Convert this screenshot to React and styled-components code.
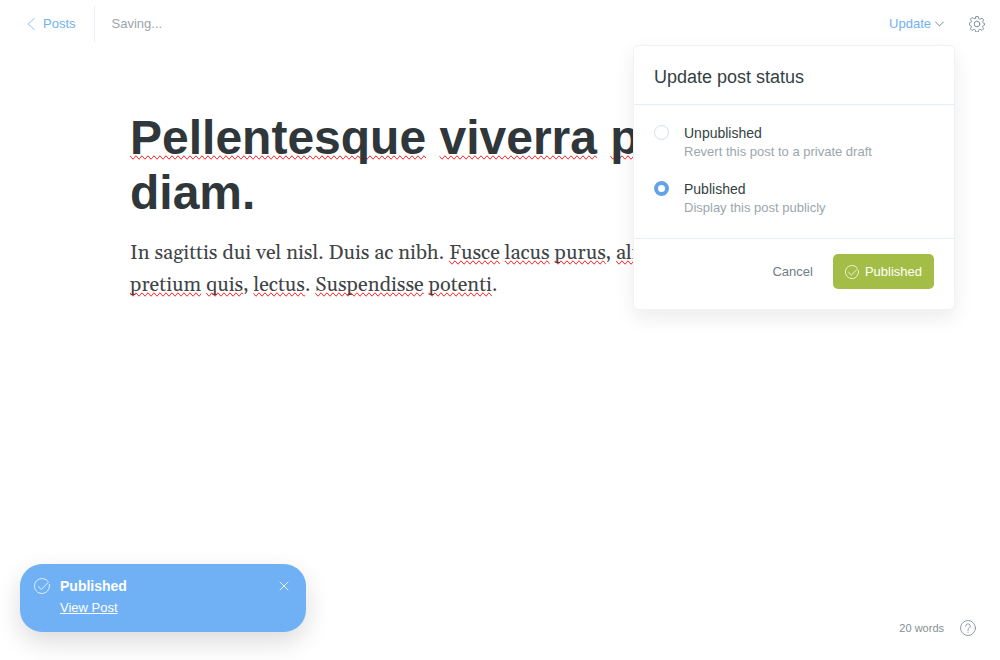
import React, { useState } from "react";
import styled, { createGlobalStyle, ThemeProvider } from "styled-components";

const theme = {
  blue: "#70b1f6",
  blueDeep: "#64a3e6",
  green: "#a4bd46",
  dark: "#2f373b",
  text: "#343f44",
  mid: "#738a94",
  muted: "#6f7d86",
  light: "#9ba6ad",
  line: "#e5eff5",
};

const GlobalStyle = createGlobalStyle`
  *, *::before, *::after { box-sizing: border-box; }
  body {
    margin: 0;
    background: #fff;
    font-family: "Liberation Sans", Arial, sans-serif;
    font-size: 13px;
    line-height: 20px;
    color: ${theme.text};
  }
  h1, h2, p { margin: 0; }
  button { font: inherit; border: 0; padding: 0; background: none; cursor: pointer; }
`;

const Page = styled.div`
  position: relative;
  display: flex;
  flex-direction: column;
  min-height: 100vh;
`;

const TopBar = styled.header`
  display: flex;
  align-items: center;
  justify-content: space-between;
  height: 48px;
  padding: 0 15px 0 27px;
`;

const BarGroup = styled.div`
  display: flex;
  align-items: center;
  gap: ${(p) => p.$gap || 0}px;
`;

const BackLink = styled.a`
  display: flex;
  align-items: center;
  gap: 8px;
  height: 36px;
  padding-right: 18px;
  border-right: 1px solid ${(p) => p.theme.line};
  color: ${(p) => p.theme.blue};
  text-decoration: none;
`;

const SaveState = styled.span`
  padding-left: 17px;
  color: ${(p) => p.theme.light};
`;

const UpdateButton = styled.button`
  display: flex;
  align-items: center;
  gap: 4px;
  color: ${(p) => p.theme.blue};
`;

const IconButton = styled.button`
  display: flex;
  color: ${(p) => p.$color || p.theme.mid};
`;

const Editor = styled.main`
  flex: 1;
  width: 100%;
  max-width: 740px;
  margin: 0 auto;
  padding-top: 62px;
  outline: none;
`;

const Title = styled.h1`
  font-size: 48px;
  line-height: 55px;
  font-weight: 700;
  color: ${(p) => p.theme.dark};
`;

const Paragraph = styled.p`
  padding-top: 17px;
  font-family: Georgia, Gelasio, "Liberation Serif", serif;
  font-size: 20px;
  line-height: 32px;
  color: #3f4447;
`;

const Misspelt = styled.span`
  text-decoration-line: spelling-error;
`;

const Menu = styled.form`
  position: absolute;
  top: 45px;
  right: 45px;
  width: 322px;
  background: #fff;
  border: 1px solid #f0f3f5;
  border-radius: 5px;
  box-shadow: 0 8px 20px rgba(0, 0, 0, 0.08);
`;

const MenuTitle = styled.h2`
  padding: 19px 20px 15px;
  font-size: 18px;
  line-height: 24px;
  font-weight: 400;
  border-bottom: 1px solid ${(p) => p.theme.line};
`;

const Options = styled.div`
  display: flex;
  flex-direction: column;
  gap: 18px;
  padding: 18px 20px 21px;
  border-bottom: 1px solid ${(p) => p.theme.line};
`;

const Option = styled.label`
  display: grid;
  grid-template-columns: 15px 1fr;
  column-gap: 15px;
  align-items: start;
  cursor: pointer;
`;

const Radio = styled.input`
  appearance: none;
  width: 15px;
  height: 15px;
  margin: 2px 0 0;
  border: 1px solid #d3e0ea;
  border-radius: 50%;
  background: #fff;
  &:checked {
    border: 4px solid ${(p) => p.theme.blueDeep};
  }
`;

const OptionName = styled.span`
  font-size: 14px;
  line-height: 20px;
`;

const OptionHint = styled.span`
  grid-column: 2;
  line-height: 18px;
  color: ${(p) => p.theme.light};
`;

const MenuActions = styled.div`
  display: flex;
  align-items: center;
  justify-content: flex-end;
  gap: 20px;
  padding: 15px 20px 20px;
`;

const CancelButton = styled.button`
  color: ${(p) => p.theme.muted};
`;

const PublishButton = styled.button`
  display: flex;
  align-items: center;
  gap: 6px;
  height: 35px;
  && { padding: 0 12px; }
  border-radius: 5px;
  background: ${(p) => p.theme.green};
  color: #fff;
`;

const BottomBar = styled.footer`
  display: flex;
  align-items: flex-end;
  justify-content: space-between;
  padding: 0 24px 22px 20px;
`;

const Toast = styled.aside`
  display: grid;
  grid-template-columns: 16px 1fr 10px;
  column-gap: 10px;
  align-items: center;
  align-content: start;
  width: 286px;
  min-height: 68px;
  margin-bottom: 6px;
  padding: 12px 17px 12px 14px;
  border-radius: 22px;
  background: ${(p) => p.theme.blue};
  color: #fff;
  box-shadow: 0 10px 26px rgba(0, 0, 0, 0.14);
`;

const ToastTitle = styled.strong`
  font-size: 14px;
  line-height: 20px;
`;

const ToastLink = styled.a`
  grid-column: 2;
  line-height: 24px;
  color: #fff;
`;

const Status = styled.div`
  display: flex;
  align-items: center;
  gap: 16px;
  font-size: 11px;
  color: #848f96;
`;

const Icon = ({ size, width = size, box = "0 0 24 24", stroke = 1, children }) => (
  <svg
    width={width}
    height={size}
    viewBox={box}
    fill="none"
    stroke="currentColor"
    strokeWidth={stroke}
    strokeLinecap="round"
    strokeLinejoin="round"
    aria-hidden="true"
  >
    {children}
  </svg>
);

const ChevronLeft = () => (
  <Icon size={12} width={8} box="0 0 8 12" stroke={0.8}>
    <path d="M7.3 .5 1 6l6.3 5.5" />
  </Icon>
);

const ChevronDown = () => (
  <Icon size={6} width={9} box="0 0 9 6">
    <path d="M.6 1 4.5 4.9 8.4 1" stroke="#738a94" />
  </Icon>
);

const Gear = () => (
  <Icon size={16} stroke={1.4}>
    <circle cx="12" cy="12" r="4.2" />
    <path d="M9.6 3.3 10.2.8h3.6l.6 2.5a2.1 2.1 0 0 0 2.9 1.2l2.200-1.300 2.500 2.500-1.300 2.200a2.100 2.100 0 0 0 1.200 2.900l1.400.4v2.400l-1.400.4a2.100 2.100 0 0 0-1.200 2.900l1.300 2.200-2.500 2.500-2.200-1.300a2.100 2.100 0 0 0-2.900 1.200l-.6 2.500h-3.600l-.6-2.500a2.100 2.100 0 0 0-2.900-1.200l-2.200 1.300L2 19.100l1.300-2.200A2.100 2.100 0 0 0 2.100 14l-1.400-.4v-3.200l1.400-.4a2.100 2.100 0 0 0 1.200-2.900L2 4.900l2.500-2.500 2.200 1.300a2.100 2.100 0 0 0 2.900-.4z" />
  </Icon>
);

const CheckCircle = ({ size, stroke = 1.4 }) => (
  <Icon size={size} stroke={stroke}>
    <path d="M20.6 4.7A11.25 11.25 0 1 0 23 9.6" />
    <path d="M6.4 12.8 10.9 17.2 21.8 6.4" />
  </Icon>
);

const Close = () => (
  <Icon size={10} box="0 0 10 10" stroke={0.8}>
    <path d="M1 1l8 8M9 1l-8 8" />
  </Icon>
);

const Help = () => (
  <Icon size={16} stroke={1.2}>
    <circle cx="12" cy="12" r="11.2" />
    <path d="M8.5 9.300a3.500 3.500 0 1 1 5.200 3c-1.200.7-1.700 1.300-1.700 2.500v1" />
    <path d="M12 18.200v.4" />
  </Icon>
);

const choices = [
  { id: "draft", name: "Unpublished", hint: "Revert this post to a private draft" },
  { id: "published", name: "Published", hint: "Display this post publicly" },
];

export default function App() {
  const [status, setStatus] = useState("published");

  return (
    <ThemeProvider theme={theme}>
      <GlobalStyle />
      <Page>
        <TopBar>
          <BarGroup>
            <BackLink href="#posts">
              <ChevronLeft />
              Posts
            </BackLink>
            <SaveState>Saving...</SaveState>
          </BarGroup>
          <BarGroup $gap={25}>
            <UpdateButton type="button">
              Update
              <ChevronDown />
            </UpdateButton>
            <IconButton type="button" aria-label="Settings">
              <Gear />
            </IconButton>
          </BarGroup>
        </TopBar>

        <Editor contentEditable suppressContentEditableWarning spellCheck={false}>
          <Title>
            <Misspelt>Pellentesque</Misspelt> <Misspelt>viverra</Misspelt>{" "}
            <Misspelt>pede</Misspelt> ac diam.
          </Title>
          <Paragraph>
            In sagittis dui vel nisl. Duis ac nibh. <Misspelt>Fusce</Misspelt>{" "}
            <Misspelt>lacus</Misspelt> <Misspelt>purus</Misspelt>,{" "}
            <Misspelt>aliquet</Misspelt> at, <Misspelt>feugiat</Misspelt> non,{" "}
            <Misspelt>pretium</Misspelt> <Misspelt>quis</Misspelt>,{" "}
            <Misspelt>lectus</Misspelt>. <Misspelt>Suspendisse</Misspelt>{" "}
            <Misspelt>potenti</Misspelt>.
          </Paragraph>
        </Editor>

        <BottomBar>
          <Toast role="status">
            <CheckCircle size={16} stroke={1.2} />
            <ToastTitle>Published</ToastTitle>
            <IconButton type="button" aria-label="Close" $color="#fff">
              <Close />
            </IconButton>
            <ToastLink href="#view">View Post</ToastLink>
          </Toast>
          <Status>
            20 words
            <IconButton type="button" aria-label="Help">
              <Help />
            </IconButton>
          </Status>
        </BottomBar>

        <Menu onSubmit={(e) => e.preventDefault()}>
          <MenuTitle>Update post status</MenuTitle>
          <Options>
            {choices.map((c) => (
              <Option key={c.id}>
                <Radio
                  type="radio"
                  name="status"
                  checked={status === c.id}
                  onChange={() => setStatus(c.id)}
                />
                <OptionName>{c.name}</OptionName>
                <OptionHint>{c.hint}</OptionHint>
              </Option>
            ))}
          </Options>
          <MenuActions>
            <CancelButton type="button">Cancel</CancelButton>
            <PublishButton type="submit">
              <CheckCircle size={14} />
              Published
            </PublishButton>
          </MenuActions>
        </Menu>
      </Page>
    </ThemeProvider>
  );
}
